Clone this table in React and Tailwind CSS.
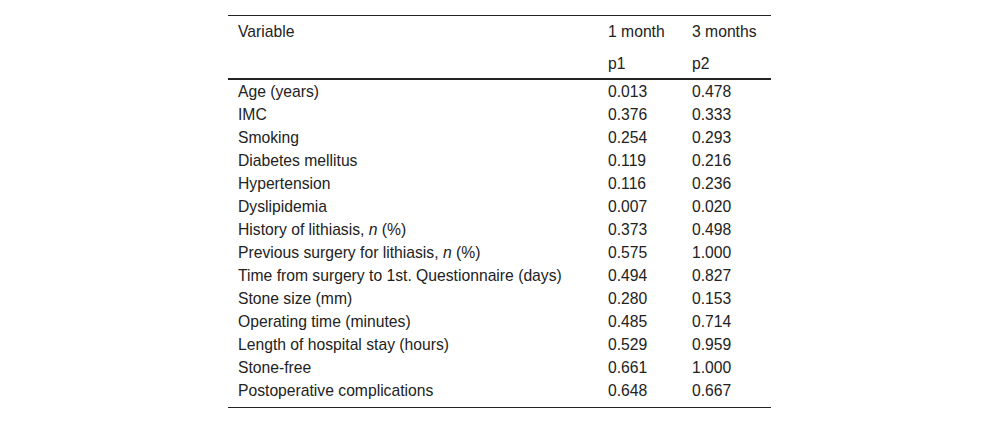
import React from "react";

const rows = [
	["Age (years)", "0.013", "0.478"],
	["IMC", "0.376", "0.333"],
	["Smoking", "0.254", "0.293"],
	["Diabetes mellitus", "0.119", "0.216"],
	["Hypertension", "0.116", "0.236"],
	["Dyslipidemia", "0.007", "0.020"],
	[<>History of lithiasis, <i>n</i> (%)</>, "0.373", "0.498"],
	[<>Previous surgery for lithiasis, <i>n</i> (%)</>, "0.575", "1.000"],
	["Time from surgery to 1st. Questionnaire (days)", "0.494", "0.827"],
	["Stone size (mm)", "0.280", "0.153"],
	["Operating time (minutes)", "0.485", "0.714"],
	["Length of hospital stay (hours)", "0.529", "0.959"],
	["Stone-free", "0.661", "1.000"],
	["Postoperative complications", "0.648", "0.667"]
];

export default function App() {
	return (
		<div className="w-[1000px] h-[423px] bg-white pt-[15px] font-['Liberation_Sans',Arial,sans-serif] text-[15.7px] text-[#222]">
			<table className="ml-[228px] w-[543px] border-collapse table-fixed">
				<thead>
					<tr className="border-t border-[#222]">
						<th className="w-[370px] pl-[10px] pt-[7px] pb-[7px] text-left font-normal leading-[18px]">
							Variable
						</th>
						<th className="w-[84px] pl-[10px] pt-[7px] pb-[7px] text-left font-normal leading-[18px]">
							1 month
						</th>
						<th className="pl-[10px] pt-[7px] pb-[7px] text-left font-normal leading-[18px]">
							3 months
						</th>
					</tr>
					<tr className="border-b-2 border-[#222]">
						<th className="pl-[10px] pt-[7px] pb-[5px]" />
						<th className="pl-[10px] pt-[7px] pb-[5px] text-left font-normal leading-[18px]">
							p1
						</th>
						<th className="pl-[10px] pt-[7px] pb-[5px] text-left font-normal leading-[18px]">
							p2
						</th>
					</tr>
				</thead>
				<tbody className="border-b border-[#222]">
					{rows.map((r, i) => (
						<tr key={i}>
							<td className={"pl-[10px] whitespace-nowrap leading-[23px]" + (i === rows.length - 1 ? " pb-[5px]" : "")}>
								{r[0]}
							</td>
							<td className={"pl-[10px] leading-[23px]" + (i === rows.length - 1 ? " pb-[5px]" : "")}>
								{r[1]}
							</td>
							<td className={"pl-[10px] leading-[23px]" + (i === rows.length - 1 ? " pb-[5px]" : "")}>
								{r[2]}
							</td>
						</tr>
					))}
				</tbody>
			</table>
		</div>
	);
}
